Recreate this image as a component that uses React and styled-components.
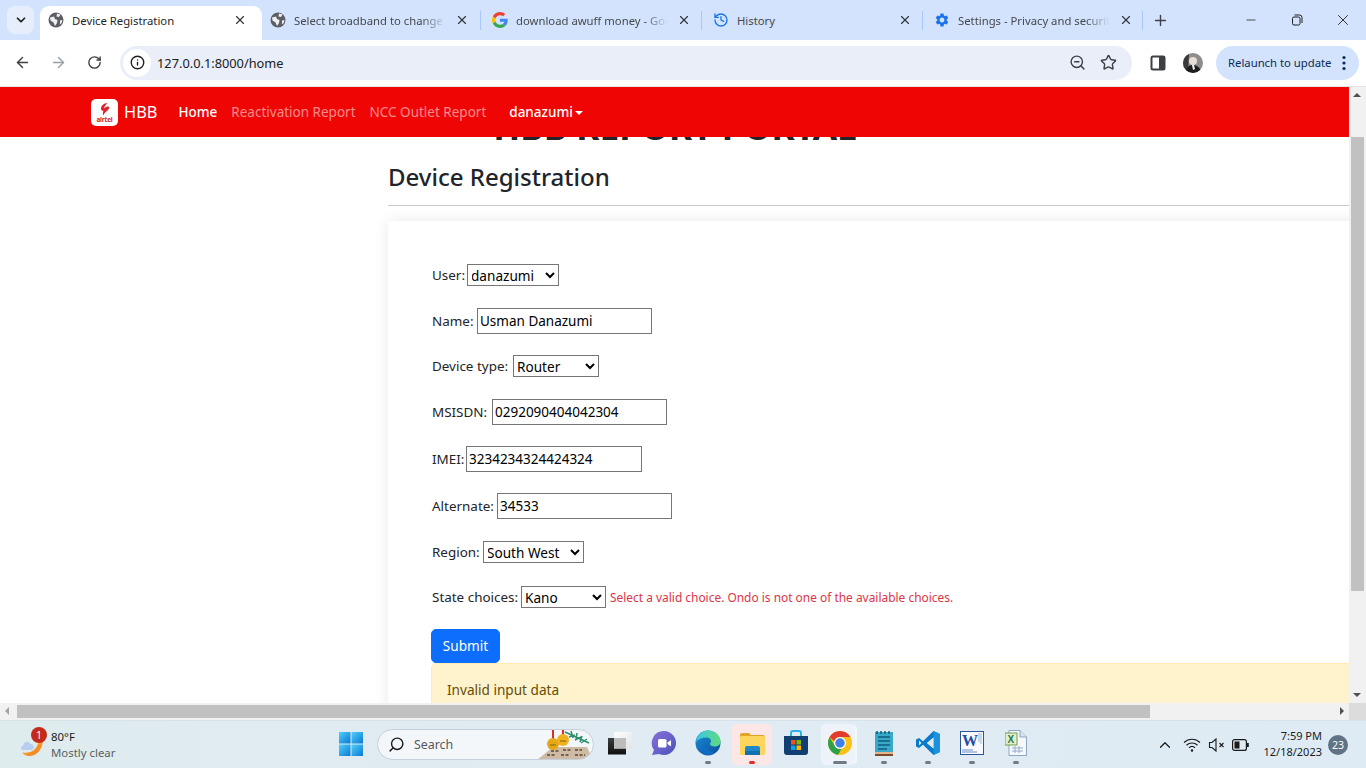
import React from "react";
import styled, { createGlobalStyle } from "styled-components";
import { ArrowLeft, ArrowRight, RotateCw, X, Plus, Minus, Star, ZoomOut, History, ChevronDown, ChevronUp, Search as SearchGlyph, Info } from "lucide-react";
import { MdSettings } from "react-icons/md";

const FONT = `"Noto Sans", "Open Sans", "Liberation Sans", sans-serif`;

const Global = createGlobalStyle`
  html, body { margin: 0; padding: 0; height: 100%; overflow: hidden; }
  body { font-family: ${FONT}; background: #fff; }
  * { box-sizing: border-box; }
`;

const Screen = styled.div`
  width: 1366px; height: 768px; display: flex; flex-direction: column; overflow: hidden;
`;

/* browser tabs */
const TabStrip = styled.div`
  height: 40px; background: #d3e3fd; display: flex; align-items: flex-end; padding-left: 7px; flex: none;
`;
const TabSearch = styled.div`
  width: 27px; height: 28px; margin: 0 6px 6px 0; border-radius: 8px; background: #e6eefb; display: flex;
  align-items: center; justify-content: center; color: #1f1f1f;
`;
const Tab = styled.div`
  position: relative; width: ${p => p.$w}px; height: 34px; display: flex; align-items: center; padding: 0 0 6px 8px;
  background: ${p => (p.$active ? "#fff" : "transparent")}; border-radius: 9px 9px 0 0; flex: none;
  color: ${p => (p.$active ? "#1f1f1f" : "#45494e")};
  &::after {
    content: ""; display: ${p => (p.$sep ? "block" : "none")}; position: absolute; right: 3px; top: 5px; width: 1px; height: 19px; background: #a8c7fa;
  }
`;
const FavSlot = styled.span`
  width: 16px; height: 16px; margin-right: 8px; flex: none; display: flex; align-items: center; justify-content: center;
`;
const TabTitle = styled.span`
  flex: none; width: 152px; margin-right: 7px; overflow: hidden; white-space: nowrap; font-size: 11.3px;
  ${p => p.$fade && "mask-image: linear-gradient(90deg,#000 84%,transparent 100%);"}
`;
const TabClose = styled.span`
  display: flex; margin-left: 2px; color: #33363a;
`;
const NewTab = styled.span`
  width: 34px; height: 34px; padding-bottom: 6px; display: flex; align-items: center; justify-content: center; color: #3f4347; margin-left: -3px;
`;
const WindowControls = styled.div`
  margin-left: auto; display: flex; height: 40px; color: #1f1f1f;
`;
const WinButton = styled.span`
  width: 46px; display: flex; align-items: center; justify-content: center;
`;

/* browser toolbar */
const Toolbar = styled.div`
  height: 47px; background: #fff; border-bottom: 1px solid #e3e3e3; display: flex; align-items: center; padding: 0 7px 1px 4px; flex: none;
`;
const NavButton = styled.span`
  width: 36px; display: flex; justify-content: center; color: ${p => p.$dim ? "#9aa0a6" : "#3c4043"};
`;
const Omnibox = styled.div`
  width: 1012px; height: 34px; margin-left: 8px; background: #e9eef8; border-radius: 17px; display: flex; align-items: center; padding-left: 3px; padding-right: 15px;
  color: #202124;
`;
const SecureChip = styled.span`
  width: 28px; height: 28px; border-radius: 50%; background: #fff; display: flex; align-items: center; justify-content: center;
`;
const Url = styled.span`
  margin-left: 6px; font-size: 12.8px; flex: 1;
`;
const OmniIcon = styled.span`
  display: flex; margin-left: 14px; color: #3c4043;
`;
const SidePanel = styled.span`
  display: flex; margin-left: 18px;
`;
const Avatar = styled.span`
  display: flex; margin-left: 17px;
`;
const Relaunch = styled.div`
  margin-left: 13px; width: 143px; height: 34px; border-radius: 17px; background: #d3e3fd; display: flex; align-items: center; padding-left: 12px;
  font-size: 11.3px; color: #0b2a55; white-space: nowrap; gap: 11px;
`;

/* viewport */
const Viewport = styled.div`
  flex: 1; min-height: 0; display: grid; grid-template-columns: 1fr 17px; grid-template-rows: 1fr 17px;
`;
const Page = styled.div`
  overflow: hidden; min-width: 0; min-height: 0; color: #212529; font-size: 13.6px;
`;
const Navbar = styled.nav`
  position: relative; z-index: 2; height: 50px; background: #f00505; display: flex; align-items: center; padding: 0 0 1px 91px;
`;
const Brand = styled.div`
  display: flex; align-items: center; color: #fff; font-size: 16.4px; margin-right: 21px;
`;
const LogoBox = styled.span`
  width: 27px; height: 27px; border-radius: 5px; background: #fff; margin: 1px 6px 0 0; display: flex; flex-direction: column; align-items: center; justify-content: center;
`;
const LogoText = styled.span`
  font-size: 6.5px; line-height: 7px; font-weight: 700; color: #d8232a; letter-spacing: -.2px; margin-top: -1px;
`;
const NavLink = styled.span`
  font-size: 13.5px; margin-right: ${p => p.$mr}px; white-space: nowrap;
  color: ${p => (p.$on ? "#fff" : "rgba(255,255,255,.55)")};
  ${p => p.$on && "font-weight: 500;"}
`;
const Caret = styled.span`
  display: inline-block; width: 0; height: 0; margin-left: 2px; vertical-align: 2px;
  border-top: 4.4px solid #fff; border-left: 4.4px solid transparent; border-right: 4.4px solid transparent;
`;
const Content = styled.div`
  margin-left: 388px; width: 1200px;
`;
const PortalTitle = styled.h1`
  margin: -31px 0 0; width: 574px; text-align: center; font-size: 35.3px; font-weight: 700; line-height: 40px; white-space: nowrap; color: #212529;
`;
const Heading = styled.h3`
  margin: 16px 0 0; font-size: 24px; line-height: 30px; font-weight: 500; color: #212529;
`;
const Rule = styled.hr`
  margin: 13px 0 0; border: 0; border-top: 1px solid #c9c9c9;
`;
const Card = styled.div`
  margin-top: 15px; padding: 39px 0 0 43px; box-shadow: 0 0 14px rgba(0,0,0,.09); background: #fff;
`;
const FormRows = styled.div`
  display: flex; flex-direction: column; gap: 14.7px; padding-left: 1px;
`;
const Row = styled.div`
  display: flex; align-items: center; height: ${p => p.$h}px; white-space: nowrap;
`;
const Label = styled.label`
  flex: none; width: ${p => p.$w}px; font-size: 13.45px;
`;
const Select = styled.select`
  height: 22px; width: ${p => p.$w}px; border: 1px solid #767676; border-radius: 0; background: #fff; color: #000;
  font: 13.6px ${FONT}; padding: 0; margin: 0; text-indent: -1px;
`;
const Input = styled.input`
  height: 26px; width: ${p => p.$w}px; border: 1px solid #767676; border-radius: 0; background: #fff; color: #000;
  font: 13.5px ${FONT}; padding: 0 2px; margin: 0; outline: none;
`;
const ErrorText = styled.small`
  color: #dc3545; font-size: 11.93px; margin-left: 4px;
`;
const Submit = styled.button`
  display: block; margin: 16.5px 0 0; width: 69px; height: 34px; background: #0d6efd; color: #fff; border: 1px solid #0d6efd; border-radius: 5px;
  font: 13.6px ${FONT}; padding: 0;
`;
const Alert = styled.div`
  height: 60px; background: #fff3cd; border: 1px solid #ffecb5; border-radius: 5px 0 0 5px; color: #664d03; padding: 15px 15px; line-height: 22px;
`;

/* scrollbars */
const VScroll = styled.div`
  background: #f1f1f1; display: flex; flex-direction: column; align-items: center; position: relative; padding-top: 50px;
`;
const VThumb = styled.div`
  width: 13px; height: 454px; background: #c1c1c1; flex: none;
`;
const ArrowTip = styled.span`
  position: absolute; width: 0; height: 0; ${p => p.$css}
`;
const HScroll = styled.div`
  background: #f1f1f1; position: relative; padding: 2px 0 2px 17px; display: flex;
`;
const HThumb = styled.div`
  width: 1133px; background: #c1c1c1;
`;
const Corner = styled.div`
  background: #dcdcdc;
`;

/* taskbar */
const Taskbar = styled.div`
  height: 48px; flex: none; display: flex; align-items: center; background: linear-gradient(90deg,#dfecee 0%,#e0ebf3 50%,#dfebf4 100%);
  border-top: 1px solid #d8e2ea; padding-left: 20px; color: #1b1b1b;
`;
const Weather = styled.div`
  width: 319px; display: flex; align-items: center; flex: none;
`;
const WeatherIcon = styled.span`
  position: relative; width: 24px; height: 28px; margin-right: 7px; display: flex;
`;
const Badge = styled.span`
  position: absolute; left: 11px; top: -4px; width: 16px; height: 16px; border-radius: 50%; background: #c42b1c; color: #fff; font-size: 10.5px; line-height: 16px; text-align: center;
`;
const WeatherText = styled.div`
  display: flex; flex-direction: column; font-size: 11.4px; line-height: 16px;
`;
const Muted = styled.span`
  color: #5a5f63;
`;
const StartButton = styled.span`
  width: 38px; flex: none; display: flex; margin-top: -1px;
`;
const SearchBox = styled.div`
  position: relative; width: 217px; height: 31px; border-radius: 16px; background: #f3f7fa; border: 1px solid #c6d0da; display: flex; align-items: center; padding-left: 10px;
  font-size: 12.4px; color: #55595d; overflow: hidden; flex: none; margin-right: 4px;
`;
const SearchDecor = styled.span`
  position: absolute; right: 0; top: -1px; display: flex;
`;
const Slot = styled.div`
  position: relative; width: 44px; height: 47px; display: flex; align-items: center; justify-content: center; flex: none;
`;
const SlotBg = styled.span`
  position: absolute; left: ${p => p.$l}px; right: ${p => p.$r}px; top: 3px; bottom: 3px; border-radius: 5px; background: ${p => p.$c};
  ${p => p.$stack && "box-shadow: 3px 0 0 -1px rgba(255,255,255,.6);"}
`;
const SlotIcon = styled.span`
  position: relative; display: flex; margin-top: -3px;
`;
const Dot = styled.span`
  position: absolute; bottom: 4px; left: 50%; transform: translateX(-50%); height: 3px; border-radius: 2px; width: ${p => p.$w || 6}px; background: ${p => p.$c || "#6f7a84"};
`;
const Tray = styled.div`
  margin-left: auto; display: flex; align-items: center; color: #1b1b1b; padding-right: 18px;
`;
const TrayIcon = styled.span`
  display: flex; margin-right: ${p => p.$mr}px;
`;
const Clock = styled.div`
  display: flex; flex-direction: column; align-items: flex-end; font-size: 11px; line-height: 16px; margin: 0 0 2px 14px;
`;
const Count = styled.span`
  width: 20px; height: 20px; margin-left: 6px; border-radius: 50%; background: #5f7384; color: #fff; font-size: 10.5px; line-height: 20px; text-align: center;
`;

/* drawings */
const Globe = () => (
  <svg width="16" height="16" viewBox="0 0 16 16">
    <circle cx="8" cy="8" r="7.5" fill="#5b5f64" />
    <path d="M2 5.5 6 4.5 7 7 9.5 8 9 11 7 14 5.5 10.5 2.5 8.5ZM9 1.5l3.5 1-1.5 2.5-2.5-.5ZM12 8.5l2.5-.5-.8 3-1.8 1.5Z" fill="#fff" opacity=".9" />
  </svg>
);
const GoogleG = () => (
  <svg width="16" height="16" viewBox="0 0 48 48">
    <path fill="#EA4335" d="M24 9.5c3.5 0 6.6 1.2 9.1 3.6l6.8-6.8C35.8 2.4 30.3 0 24 0 14.6 0 6.5 5.4 2.6 13.2l7.9 6.1C12.4 13.7 17.7 9.5 24 9.5z" />
    <path fill="#4285F4" d="M47 24.5c0-1.6-.1-3.1-.4-4.5H24v9h12.9c-.6 3-2.2 5.5-4.8 7.2l7.7 6c4.5-4.2 7.2-10.3 7.2-17.7z" />
    <path fill="#FBBC05" d="M10.5 28.7A14.400 14.400 0 0 1 10.500 19.300l-7.900-6.100A24 24 0 0 0 2.600 34.800z" />
    <path fill="#34A853" d="M24 48c6.500 0 11.900-2.100 15.900-5.800l-7.700-6c-2.200 1.500-4.900 2.300-8.200 2.300-6.300 0-11.600-4.200-13.500-9.800l-7.900 6.100C6.500 42.600 14.600 48 24 48z" />
  </svg>
);
const Restore = () => (
  <svg width="12" height="12" viewBox="0 0 12 12" fill="none" stroke="currentColor" strokeWidth="1">
    <rect x="1.500" y="3" width="7.500" height="8" rx="1.500" />
    <path d="M3.500 1h5a2.500 2.500 0 0 1 2.500 2.500V9" />
  </svg>
);
const SidePanelIcon = () => (
  <svg width="16" height="16" viewBox="0 0 16 16">
    <rect x="1.500" y="1.500" width="13" height="13" rx="1.500" fill="#fff" stroke="#3c4043" strokeWidth="2" />
    <rect x="9" y="1.500" width="6" height="13" fill="#3c4043" />
  </svg>
);
const AvatarPic = () => (
  <svg width="20" height="20" viewBox="0 0 20 20">
    <defs><clipPath id="av"><circle cx="10" cy="10" r="10" /></clipPath></defs>
    <g clipPath="url(#av)">
      <rect width="20" height="20" fill="#8d8d8d" />
      <path d="M0 0h6l-1 20H0Z" fill="#3a3a3a" />
      <circle cx="10" cy="8" r="4" fill="#e6dfd8" />
      <path d="M3 20c0-6 3-8 7-8s8 3 8 8Z" fill="#1d1d1d" />
      <path d="M9 12l2 0 1 4-2 1Z" fill="#f1f1f1" />
    </g>
  </svg>
);
const Kebab = () => (
  <svg width="4" height="16" viewBox="0 0 4 16" fill="#0b2a55">
    <circle cx="2" cy="2.500" r="1.600" /><circle cx="2" cy="8" r="1.600" /><circle cx="2" cy="13.500" r="1.600" />
  </svg>
);
const AirtelSwoosh = () => (
  <svg width="14" height="15" viewBox="0 0 14 15">
    <path d="M9.500 1C6 1.200 3 3.500 3 6.500c0 1.500 1 2.500 2.500 2.300C4.800 10.500 4.600 12 5.500 13.500 6 11.500 7.500 10 9.500 8.500 11.300 7 11.800 5.500 10.800 4.800 9.500 4 7.500 5 6.300 6.500 6 5 7.500 2.800 9.500 1Z" fill="#e0232a" />
  </svg>
);
const WeatherArt = () => (
  <svg width="24" height="28" viewBox="0 0 24 28">
    <defs><linearGradient id="moon" x1="0" y1="0" x2="1" y2="1"><stop offset="0" stopColor="#fdbb3a" /><stop offset="1" stopColor="#f0761a" /></linearGradient></defs>
    <path d="M23 10C22 20 15 26 8 25 5.500 24.600 3.500 23.500 2 21.500 11 23 17 19 19 9Z" fill="url(#moon)" />
    <path d="M3 19c-2.500 0-3-4 .3-4.300C3.200 10.500 9 9.500 10.500 13c3-.500 5 4 1.500 6Z" fill="#b7cdf1" />
  </svg>
);
const WinLogo = () => (
  <svg width="24" height="24" viewBox="0 0 24 24">
    <defs><linearGradient id="w" x1="0" y1="0" x2="1" y2="1"><stop offset="0" stopColor="#4fd0fa" /><stop offset="1" stopColor="#0a78d4" /></linearGradient></defs>
    <rect x="0" y="0" width="11.500" height="11.500" fill="url(#w)" />
    <rect x="12.500" y="0" width="11.500" height="11.500" fill="url(#w)" />
    <rect x="0" y="12.500" width="11.500" height="11.500" fill="url(#w)" />
    <rect x="12.500" y="12.500" width="11.500" height="11.500" fill="url(#w)" />
  </svg>
);
const BellsArt = () => (
  <svg width="56" height="31" viewBox="0 0 56 31">
    <path d="M0 31 16 18h34l6 13Z" fill="#cdbba6" />
    <path d="M14 22h8M26 21h8M38 21h7M10 26h9M24 26h9M38 26h10" stroke="#5a4632" strokeWidth="1.500" strokeDasharray="3 1.500" />
    <path d="M28 3 52 14M34 2l2 7M40 4l-1 7M45 7l-2 6M32 8l6-2M38 11l6-3M44 14l6-4" stroke="#2f8f6d" strokeWidth="1.500" />
    <rect x="15" y="1" width="2" height="9" fill="#e02b2b" />
    <rect x="25" y="0" width="2" height="8" fill="#e02b2b" />
    <circle cx="16" cy="15" r="6" fill="#e5a817" />
    <circle cx="26" cy="11" r="6" fill="#efb21d" />
    <path d="M13 16h6M23 12h6" stroke="#8a5d08" strokeWidth="1" />
  </svg>
);
const TaskViewArt = () => (
  <svg width="24" height="23" viewBox="0 0 24 23">
    <defs>
      <linearGradient id="tv1" x1="0" y1="0" x2="0" y2="1"><stop offset="0" stopColor="#3d3d3d" /><stop offset="1" stopColor="#111" /></linearGradient>
      <linearGradient id="tv2" x1="0" y1="0" x2="1" y2="1"><stop offset="0" stopColor="#fff" /><stop offset="1" stopColor="#e4e4e4" /></linearGradient>
    </defs>
    <rect x="0" y="6" width="18" height="16.500" fill="url(#tv1)" />
    <rect x="6" y="0" width="17.500" height="16.500" fill="url(#tv2)" />
    <rect x="6" y="6" width="12" height="10.500" fill="#bdbdbd" />
  </svg>
);
const MeetArt = () => (
  <svg width="26" height="26" viewBox="0 0 26 26">
    <defs><linearGradient id="m" x1="0" y1="0" x2="1" y2="1"><stop offset="0" stopColor="#8a6fd9" /><stop offset="1" stopColor="#4a55bb" /></linearGradient></defs>
    <path d="M13 1a12 12 0 1 1-5 22.900L1 25l2-5A12 12 0 0 1 13 1Z" fill="url(#m)" />
    <rect x="7" y="9" width="8.500" height="8.500" rx="1.500" fill="#fff" />
    <path d="M16.500 12.500 20 10v6.500l-3.500-2.500Z" fill="#fff" />
  </svg>
);
const EdgeArt = () => (
  <svg width="26" height="26" viewBox="0 0 26 26">
    <defs>
      <linearGradient id="e1" x1="0" y1="0" x2="1" y2="1"><stop offset="0" stopColor="#1a8fd6" /><stop offset="1" stopColor="#0b4c9b" /></linearGradient>
      <linearGradient id="e2" x1="0" y1="0" x2="1" y2="0"><stop offset="0" stopColor="#3ac6e8" /><stop offset="1" stopColor="#5fdc7c" /></linearGradient>
    </defs>
    <circle cx="13" cy="13" r="12.500" fill="url(#e1)" />
    <path d="M1 12C2 5 7 .5 13 .5c7 0 12.500 5 12.500 11 0 3-2.500 5-6 5-2.500 0-4.500-1-4.500-2.500 0-1 1-1.500 1-3 0-2-2-3.500-4.500-3.500C7 7.500 3 9 1 12Z" fill="url(#e2)" />
    <path d="M11 15c0 4 3.500 7 8 7-2 2-4 3-6 3-3 0-6-3-6-6 0-2 2-4 4-4Z" fill="#0e6cc4" />
  </svg>
);
const ExplorerArt = () => (
  <svg width="25" height="24" viewBox="0 0 25 24">
    <path d="M0 4a2 2 0 0 1 2-2h7l2 2h12a2 2 0 0 1 2 2v2H0Z" fill="#e0a526" />
    <rect x="0" y="5" width="25" height="19" rx="1.500" fill="#fcd65c" />
    <rect x="5" y="15" width="15" height="9" rx="2" fill="#1d88c9" />
    <rect x="5" y="20" width="15" height="4" fill="#1170ad" />
  </svg>
);
const StoreArt = () => (
  <svg width="24" height="26" viewBox="0 0 24 26">
    <path d="M7 6V3a2 2 0 0 1 2-2h6a2 2 0 0 1 2 2v3" fill="none" stroke="#2db1e6" strokeWidth="2" />
    <path d="M0 6h24v16a3 3 0 0 1-3 3H3a3 3 0 0 1-3-3Z" fill="#123f72" />
    <rect x="7" y="10" width="4.500" height="4.500" fill="#f25022" />
    <rect x="12.500" y="10" width="4.500" height="4.500" fill="#7fba00" />
    <rect x="7" y="15.500" width="4.500" height="4.500" fill="#00a4ef" />
    <rect x="12.500" y="15.500" width="4.500" height="4.500" fill="#ffb900" />
  </svg>
);
const ChromeArt = () => (
  <svg width="24" height="24" viewBox="0 0 48 48">
    <circle cx="24" cy="24" r="24" fill="#fbc116" />
    <path d="M24 0a24 24 0 0 1 20.800 12H24a12 12 0 0 0-11.400 8.300L3.200 12A24 24 0 0 1 24 0Z" fill="#e33b2e" />
    <path d="M3.200 12 13.600 30a12 12 0 0 0 13.400 5.600L20.400 47.700A24 24 0 0 1 3.200 12Z" fill="#2fa04a" />
    <circle cx="24" cy="24" r="12" fill="#fff" />
    <circle cx="24" cy="24" r="9.500" fill="#3f80ea" />
  </svg>
);
const NotepadArt = () => (
  <svg width="18" height="26" viewBox="0 0 18 26">
    <rect x="0" y="2" width="18" height="20" fill="#3aa8c9" />
    <path d="M2 1v3M6 1v3M10 1v3M14 1v3" stroke="#0d5f7a" strokeWidth="1.500" />
    <path d="M3 7h12M3 11h12M3 15h12M3 19h9" stroke="#0f5c7c" strokeWidth="1.700" />
    <rect x="0" y="22" width="18" height="2" fill="#e2b58f" />
    <rect x="0" y="24" width="18" height="2" fill="#7b4a26" />
  </svg>
);
const VSCodeArt = () => (
  <svg width="24" height="24" viewBox="0 0 24 24">
    <path d="M17.500 0 24 3v18l-6.500 3L7 13.800l-4 3.200-3-1.500V8.500L3 7l4 3.200Z" fill="#0a7acb" />
    <path d="M17.500 6.500 11 12l6.500 5.500Z" fill="#e0ebf3" />
    <path d="M3 9.500v5l2.500-2.500Z" fill="#e0ebf3" />
    <path d="M17.500 0 24 3v18l-6.500 3Z" fill="#1a93dc" />
    <path d="M17.500 6.500 11 12l6.500 5.500Z" fill="#e0ebf3" />
  </svg>
);
const WordArt = () => (
  <svg width="24" height="24" viewBox="0 0 24 24">
    <rect x="0.500" y="0.500" width="23" height="23" fill="#f7f9fc" stroke="#2b5797" />
    <text x="2" y="15" fontFamily="Liberation Serif, serif" fontWeight="700" fontSize="16" fill="#1f4fa3">W</text>
    <path d="M2 19h11M2 21h15" stroke="#6d8fc7" strokeWidth="1.200" />
    <path d="M19 2v9M21 2v11" stroke="#9db5d9" strokeWidth="1" />
  </svg>
);
const ExcelArt = () => (
  <svg width="22" height="26" viewBox="0 0 22 26">
    <path d="M4 .5h11l6.500 6.500v18.500H4Z" fill="#f6f8fb" stroke="#8ba5c4" />
    <path d="M15 .5V7h6.500" fill="#d9e4f0" stroke="#8ba5c4" />
    <rect x="0" y="3" width="12" height="12" fill="#e2eed2" stroke="#6fa04a" />
    <text x="2.500" y="13" fontFamily="Liberation Sans, sans-serif" fontWeight="700" fontSize="10" fill="#257a3e">X</text>
    <path d="M7 18h11M7 21h11M10 16v7M14 16v7" stroke="#8ba5c4" strokeWidth=".9" />
  </svg>
);
const Wifi = () => (
  <svg width="18" height="16" viewBox="0 0 18 16" fill="none" stroke="#1b1b1b" strokeWidth="1.200">
    <path d="M1 5.500a11.500 11.500 0 0 1 16 0M3.500 8.200a8 8 0 0 1 11 0M6 10.800a4.500 4.500 0 0 1 6 0" />
    <circle cx="9" cy="13.500" r="1.200" fill="#1b1b1b" stroke="none" />
  </svg>
);
const Mute = () => (
  <svg width="18" height="16" viewBox="0 0 18 16" fill="none" stroke="#1b1b1b" strokeWidth="1.100">
    <path d="M1.500 5.500h2.500L8 2v12L4 10.500H1.500Z" />
    <path d="M11.500 6l4 4M15.500 6l-4 4" />
  </svg>
);
const Battery = () => (
  <svg width="17" height="12" viewBox="0 0 17 12" fill="none">
    <rect x=".6" y=".6" width="13.800" height="10.800" rx="2" stroke="#1b1b1b" strokeWidth="1.200" />
    <rect x="2.500" y="2.500" width="5" height="7" fill="#1b1b1b" />
    <rect x="15" y="4" width="1.800" height="4" fill="#1b1b1b" />
  </svg>
);

const tabs = [
  { w: 222, t: "Device Registration", icon: <Globe />, active: true },
  { w: 222, t: "Select broadband to change", icon: <Globe />, sep: true, fade: true },
  { w: 221, t: "download awuff money - Google", icon: <GoogleG />, sep: true, fade: true },
  { w: 221, t: "History", icon: <History size={16} color="#1a73e8" strokeWidth={2} />, sep: true },
  { w: 220, t: "Settings - Privacy and security", icon: <MdSettings size={18} color="#1a73e8" />, sep: true, fade: true },
];
const fields = [
  { k: "User:", lw: 35, w: 92, h: 30, opts: ["danazumi"] },
  { k: "Name:", lw: 45, w: 175, h: 32, v: "Usman Danazumi" },
  { k: "Device type:", lw: 81, w: 86, h: 30, opts: ["Router"] },
  { k: "MSISDN:", lw: 60, w: 175, h: 32, v: "0292090404042304" },
  { k: "IMEI:", lw: 34, w: 176, h: 32.6, v: "3234234324424324" },
  { k: "Alternate:", lw: 65, w: 175, h: 32, v: "34533" },
  { k: "Region:", lw: 51, w: 101, h: 30, opts: ["South West"] },
  { k: "State choices:", lw: 89, w: 85, h: 31, opts: ["Kano"], err: "Select a valid choice. Ondo is not one of the available choices." },
];
const dock = [
  { art: <TaskViewArt /> },
  { art: <MeetArt /> },
  { art: <EdgeArt />, dot: {} },
  { art: <ExplorerArt />, dot: { c: "#d9302c", w: 6 }, bg: { c: "#fde6e6", l: 2, r: 2 } },
  { art: <StoreArt /> },
  { art: <ChromeArt />, dot: { w: 14 }, bg: { c: "#edf3f8", l: 3, r: 7, stack: true } },
  { art: <NotepadArt />, dot: {} },
  { art: <VSCodeArt />, dot: {} },
  { art: <WordArt />, dot: {} },
  { art: <ExcelArt />, dot: {} },
];

export default function App() {
  return (
    <Screen>
      <Global />
      <TabStrip>
        <TabSearch><ChevronDown size={14} strokeWidth={3} /></TabSearch>
        {tabs.map(t => (
          <Tab key={t.t} $w={t.w} $active={t.active} $sep={t.sep}>
            <FavSlot>{t.icon}</FavSlot>
            <TabTitle $fade={t.fade}>{t.t}</TabTitle>
            <TabClose><X size={14} strokeWidth={2} /></TabClose>
          </Tab>
        ))}
        <NewTab><Plus size={17} strokeWidth={2} /></NewTab>
        <WindowControls>
          <WinButton><Minus size={14} strokeWidth={1.3} /></WinButton>
          <WinButton><Restore /></WinButton>
          <WinButton><X size={18} strokeWidth={1.2} /></WinButton>
        </WindowControls>
      </TabStrip>

      <Toolbar>
        <NavButton><ArrowLeft size={17} strokeWidth={2} /></NavButton>
        <NavButton $dim><ArrowRight size={17} strokeWidth={2} /></NavButton>
        <NavButton><RotateCw size={15} strokeWidth={2.2} /></NavButton>
        <Omnibox>
          <SecureChip><Info size={15} strokeWidth={2.2} /></SecureChip>
          <Url>127.0.0.1:8000/home</Url>
          <OmniIcon><ZoomOut size={17} strokeWidth={2} /></OmniIcon>
          <OmniIcon><Star size={17} strokeWidth={2} /></OmniIcon>
        </Omnibox>
        <SidePanel><SidePanelIcon /></SidePanel>
        <Avatar><AvatarPic /></Avatar>
        <Relaunch>Relaunch to update<Kebab /></Relaunch>
      </Toolbar>

      <Viewport>
        <Page>
          <Navbar>
            <Brand>
              <LogoBox><AirtelSwoosh /><LogoText>airtel</LogoText></LogoBox>
              HBB
            </Brand>
            <NavLink $on $mr={14}>Home</NavLink>
            <NavLink $mr={14}>Reactivation Report</NavLink>
            <NavLink $mr={23}>NCC Outlet Report</NavLink>
            <NavLink $on $mr={0}>danazumi<Caret /></NavLink>
          </Navbar>
          <Content>
            <PortalTitle>HBB REPORT PORTAL</PortalTitle>
            <Heading>Device Registration</Heading>
            <Rule />
            <Card>
              <FormRows>
                {fields.map(f => (
                  <Row key={f.k} $h={f.h}>
                    <Label $w={f.lw}>{f.k}</Label>
                    {f.opts ? (
                      <Select $w={f.w} defaultValue={f.opts[0]}>
                        {f.opts.map(o => <option key={o}>{o}</option>)}
                      </Select>
                    ) : (
                      <Input $w={f.w} defaultValue={f.v} />
                    )}
                    {f.err && <ErrorText>{f.err}</ErrorText>}
                  </Row>
                ))}
              </FormRows>
              <Submit>Submit</Submit>
              <Alert>Invalid input data</Alert>
            </Card>
          </Content>
        </Page>
        <VScroll>
          <ArrowTip $css="top: 6px; left: 4px; border-left: 4px solid transparent; border-right: 4px solid transparent; border-bottom: 4px solid #505050;" />
          <VThumb />
          <ArrowTip $css="bottom: 6px; left: 4px; border-left: 4px solid transparent; border-right: 4px solid transparent; border-top: 4px solid #505050;" />
        </VScroll>
        <HScroll>
          <ArrowTip $css="left: 5px; top: 4px; border-top: 4px solid transparent; border-bottom: 4px solid transparent; border-right: 4px solid #a3a3a3;" />
          <HThumb />
          <ArrowTip $css="right: 5px; top: 4px; border-top: 4px solid transparent; border-bottom: 4px solid transparent; border-left: 4px solid #505050;" />
        </HScroll>
        <Corner />
      </Viewport>

      <Taskbar>
        <Weather>
          <WeatherIcon><WeatherArt /><Badge>1</Badge></WeatherIcon>
          <WeatherText>
            <span>80°F</span>
            <Muted>Mostly clear</Muted>
          </WeatherText>
        </Weather>
        <StartButton><WinLogo /></StartButton>
        <SearchBox>
          <SearchGlyph size={17} strokeWidth={2} color="#1b1b1b" style={{ transform: "scaleX(-1)", marginRight: 9 }} />
          Search
          <SearchDecor><BellsArt /></SearchDecor>
        </SearchBox>
        {dock.map((d, i) => (
          <Slot key={i}>
            {d.bg && <SlotBg $c={d.bg.c} $l={d.bg.l} $r={d.bg.r} $stack={d.bg.stack} />}
            <SlotIcon>{d.art}</SlotIcon>
            {d.dot && <Dot $c={d.dot.c} $w={d.dot.w} />}
          </Slot>
        ))}
        <Tray>
          <TrayIcon $mr={9}><ChevronUp size={18} strokeWidth={1.6} /></TrayIcon>
          <TrayIcon $mr={7}><Wifi /></TrayIcon>
          <TrayIcon $mr={6}><Mute /></TrayIcon>
          <TrayIcon $mr={0}><Battery /></TrayIcon>
          <Clock>
            <span>7:59 PM</span>
            <span>12/18/2023</span>
          </Clock>
          <Count>23</Count>
        </Tray>
      </Taskbar>
    </Screen>
  );
}
